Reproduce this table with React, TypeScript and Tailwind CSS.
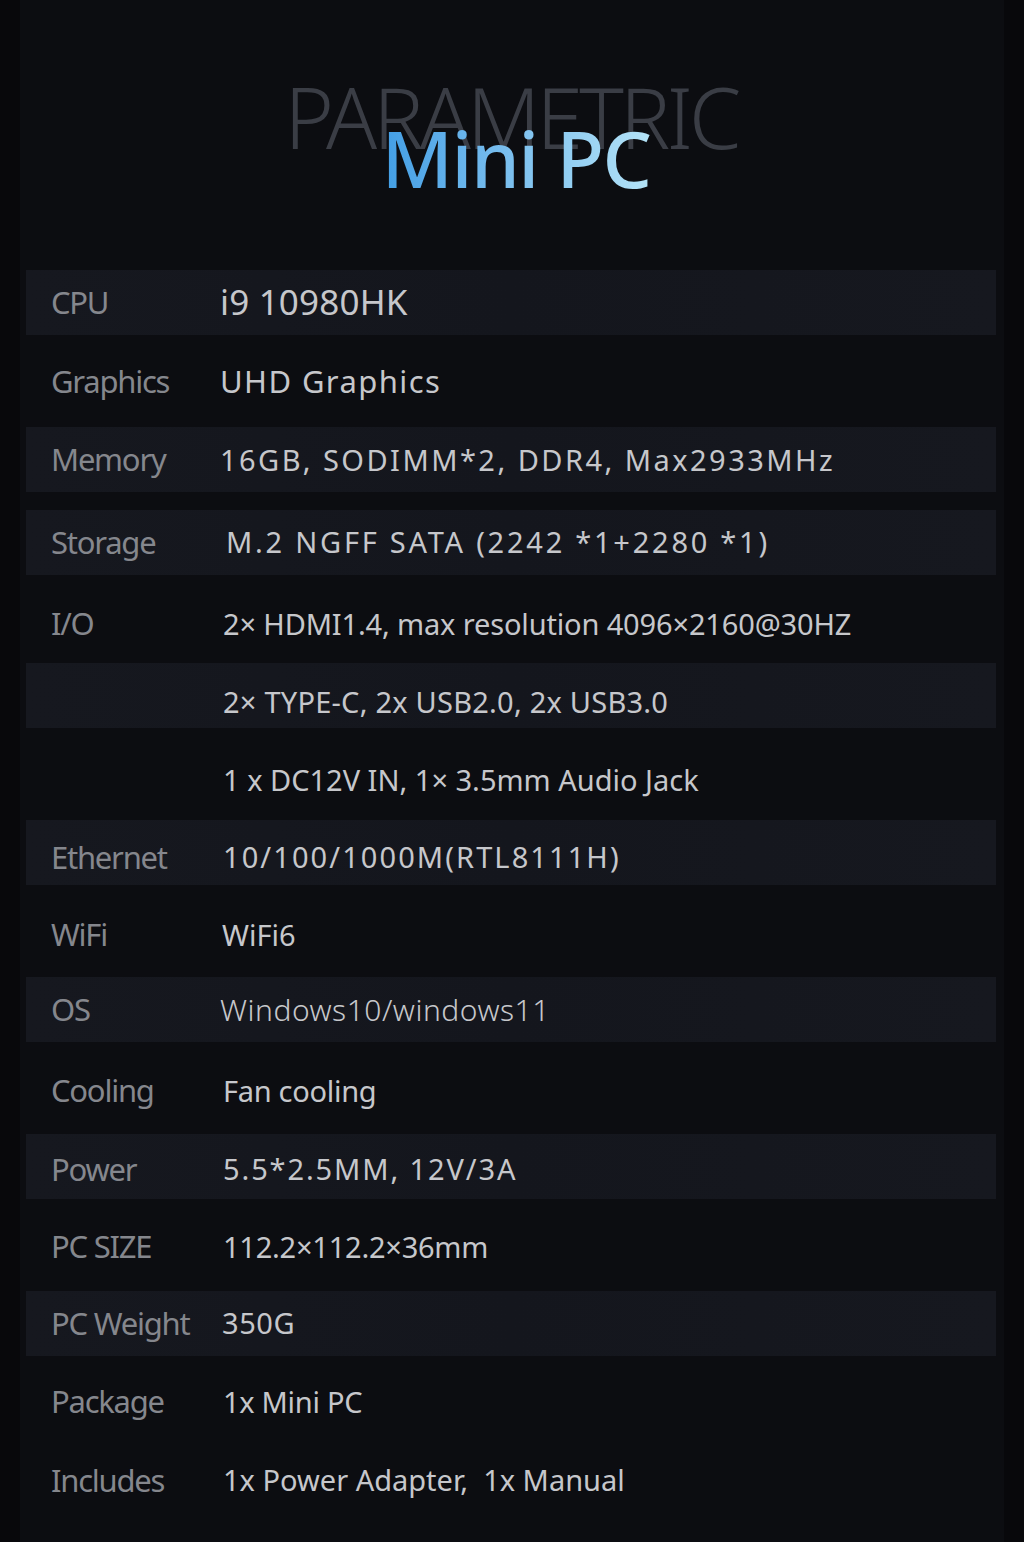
const SPECS = [
  { label: "CPU", value: "i9 10980HK", striped: true, row: "", cls: "text-[35px] tracking-[0.005em]" },
  { label: "Graphics", value: "UHD Graphics", striped: false, row: "", cls: "text-[31px] tracking-[0.045em]" },
  { label: "Memory", value: "16GB, SODIMM*2, DDR4, Max2933MHz", striped: true, row: "", cls: "text-[29px] tracking-[0.085em]" },
  { label: "Storage", value: "M.2 NGFF SATA (2242 *1+2280 *1)", striped: true, row: "mt-[4px] mb-[-4px]", cls: "text-[29px] tracking-[0.095em] pl-[6px]" },
  { label: "I/O", value: "2× HDMI1.4, max resolution 4096×2160@30HZ", striped: false, row: "pt-[14px]", cls: "text-[29px] tracking-[-0.005em] pl-[3px]" },
  { label: "", value: "2× TYPE-C, 2x USB2.0, 2x USB3.0", striped: true, row: "pt-[14px]", cls: "text-[29px] tracking-[0.008em] pl-[3px]" },
  { label: "", value: "1 x DC12V IN, 1× 3.5mm Audio Jack", striped: false, row: "pt-[12px]", cls: "text-[29px] tracking-[0em] pl-[3px]" },
  { label: "Ethernet", value: "10/100/1000M(RTL8111H)", striped: true, row: "pt-[10px]", cls: "text-[29px] tracking-[0.072em] pl-[3px]" },
  { label: "WiFi", value: "WiFi6", striped: false, row: "pt-[8px]", cls: "text-[29px] tracking-[0em] pl-[2px]" },
  { label: "OS", value: "Windows10/windows11", striped: true, row: "", cls: "text-[30px] font-light tracking-[0.017em]" },
  { label: "Cooling", value: "Fan cooling", striped: false, row: "pt-[6px]", cls: "text-[29px] tracking-[-0.01em] pl-[3px]" },
  { label: "Power", value: "5.5*2.5MM, 12V/3A", striped: true, row: "pt-[6px]", cls: "text-[29px] tracking-[0.065em] pl-[3px]" },
  { label: "PC SIZE", value: "112.2×112.2×36mm", striped: false, row: "pt-[4px]", cls: "text-[29px] tracking-[-0.008em] pl-[3px]" },
  { label: "PC Weight", value: "350G", striped: true, row: "", cls: "text-[29px] tracking-[0.02em] pl-[2px]" },
  { label: "Package", value: "1x Mini PC", striped: false, row: "", cls: "text-[29px] tracking-[-0.01em] pl-[3px]" },
  { label: "Includes", value: "1x Power Adapter,  1x Manual", striped: false, row: "", cls: "text-[29px] tracking-[0em] pl-[3px] whitespace-pre" },
];

export default function App() {
  return (
    <div
      className="w-[1024px] h-[1542px] bg-[#08080b] flex overflow-hidden"
      style={{ fontFamily: '"Noto Sans", "Open Sans", sans-serif' }}
    >
      <div className="flex-1 mx-[20px] bg-[#0c0d11] flex flex-col pl-[6px] pr-[8px]">
        {/* Title */}
        <div className="flex flex-col items-center pt-[75px]">
          <div className="text-[84px] leading-none font-light text-[#3a3d45] tracking-[-0.045em]">
            PARAMETRIC
          </div>
          <div className="mt-[-40px] pl-[10px] text-[78px] leading-none font-medium tracking-[-0.02em] bg-gradient-to-r from-[#3c9be4] to-[#b4e3f7] bg-clip-text text-transparent">
            Mini PC
          </div>
        </div>

        {/* Spec rows */}
        <div className="mt-[73px] flex flex-col gap-[13.5px]">
          {SPECS.map((row, i) => (
            <div
              key={i}
              className={`h-[65px] flex items-center ${row.row} ${
                row.striped ? "bg-gradient-to-r from-[#16181f] via-[#14161d] to-[#16181f]" : ""
              }`}
            >
              <div className="w-[194px] pl-[25px] text-[31px] tracking-[-0.04em] text-[#85878d] whitespace-nowrap">
                {row.label}
              </div>
              <div className={`text-[#c6c7cb] whitespace-nowrap ${row.cls}`}>{row.value}</div>
            </div>
          ))}
        </div>
      </div>
    </div>
  );
}
